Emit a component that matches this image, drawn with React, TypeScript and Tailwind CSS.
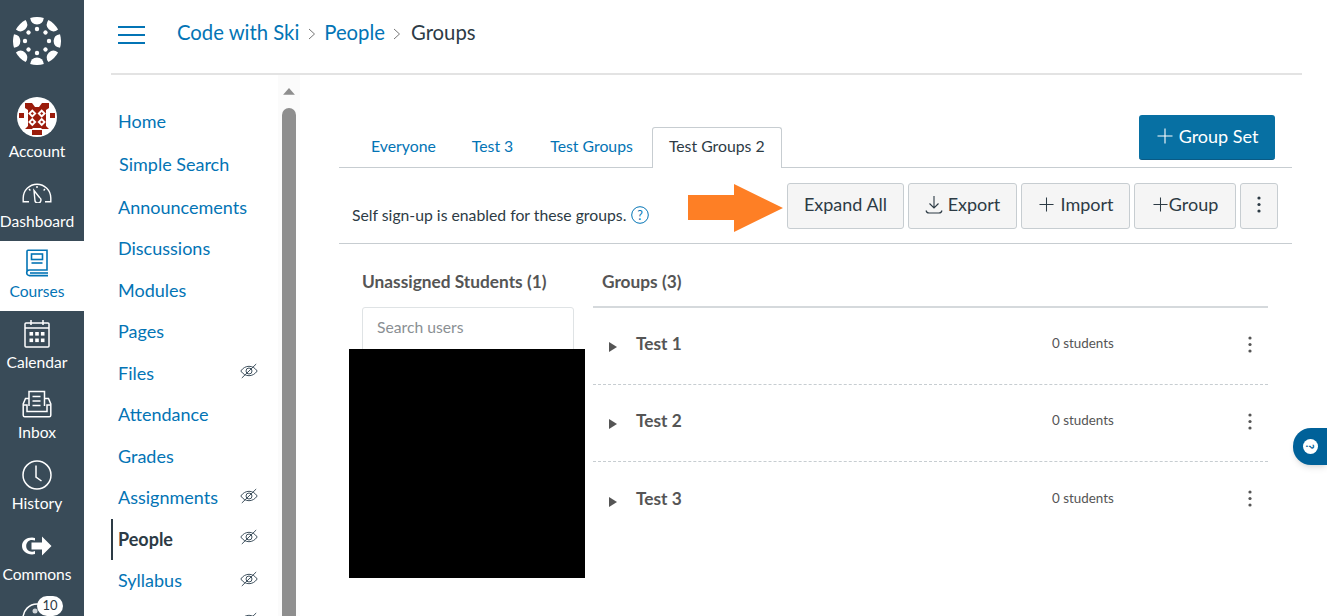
import React from "react";

const Logo = () => (
  <svg width="48" height="48" viewBox="0 0 48 48" fill="#fff">
    {[0, 45, 90, 135, 180, 225, 270, 315].map((a) => (
      <g key={a} transform={`rotate(${a} 24 24)`}>
        <path d="M17.200 1 A24 24 0 0 1 30.800 1 Q30 7.200 24 7.400 Q18 7.200 17.200 1Z" />
        <circle cx="24" cy="12" r="2.200" />
      </g>
    ))}
  </svg>
);

const Avatar = () => (
  <svg width="40" height="40" viewBox="0 0 40 40">
    <circle cx="20" cy="20" r="20" fill="#fff" />
    <path d="M8 6h7l3 4h4l3-4h7v5l-3 2v16l3 3H25l-1-1H16l-1 1H8l3-3V13l-3-2z" fill="#9b1c0c" />
    {[[15.300, 16.500], [24.700, 16.500], [15.300, 25], [24.700, 25]].map(([x, y]) => (
      <g key={`${x}-${y}`}>
        <path d={`M${x} ${y - 4.200}l4.200 4.200-4.200 4.200-4.200-4.200z`} fill="#fff" />
        <path d={`M${x} ${y - 1.600}l1.600 1.600-1.600 1.600-1.600-1.600z`} fill="#9b1c0c" />
      </g>
    ))}
    <rect x="2" y="16" width="5" height="5" fill="#9b1c0c" />
    <rect x="33" y="16" width="5" height="5" fill="#9b1c0c" />
    <rect x="15" y="33" width="10" height="5" fill="#9b1c0c" />
  </svg>
);

const Dashboard = () => (
  <svg width="30" height="21" viewBox="0 0 30 21" fill="none" stroke="#fff" strokeWidth="1.400">
    <path d="M7 19.800H1.200V16A13.800 13.800 0 0 1 28.800 16v3.800H23" />
    <path d="M12 8.500l5.500 7a3 3 0 1 1-4.600 2.400z" />
    <path d="M15 4v2M7 7l1.400 1.400M23 7l-1.400 1.400" />
  </svg>
);

const Book = () => (
  <svg width="26" height="28" viewBox="0 0 26 28" fill="none" stroke="#0374b5" strokeWidth="1.600">
    <path d="M3 22V2.200a1 1 0 0 1 1-1h19V21H5.500a2.800 2.800 0 0 0 0 5.600H24" />
    <path d="M6 24h18" />
    <rect x="7.500" y="5" width="11" height="5.500" />
    <path d="M7.500 14h11" />
  </svg>
);

const Calendar = () => (
  <svg width="26" height="29" viewBox="0 0 26 29" fill="none" stroke="#fff" strokeWidth="1.500">
    <rect x="1" y="4" width="24" height="24" rx="1" />
    <path d="M1 9h24M7 1v5M19 1v5" />
    {[[5.500, 13], [11.200, 13], [16.900, 13], [5.500, 19.500], [11.200, 19.500], [16.900, 19.500]].map(([x, y]) => (
      <rect key={`${x}-${y}`} x={x} y={y} width="3.600" height="3.600" fill="#fff" stroke="none" />
    ))}
  </svg>
);

const Inbox = () => (
  <svg width="30" height="28" viewBox="0 0 30 28" fill="none" stroke="#fff" strokeWidth="1.500">
    <path d="M7 16V1.500h15.500V16" />
    <path d="M10.500 6.500h8M10.500 11h8M10.500 15.500h8" />
    <path d="M7 8.500H3.500L1.200 14v11.200a1.500 1.500 0 0 0 1.500 1.500h24.600a1.500 1.500 0 0 0 1.500-1.500V14l-2.300-5.500H22.500" />
    <path d="M1.500 15h3.500v6.500h20V15h3.500" />
  </svg>
);

const Clock = () => (
  <svg width="30" height="30" viewBox="0 0 30 30" fill="none" stroke="#fff" strokeWidth="1.500">
    <circle cx="15" cy="15" r="14" />
    <path d="M14 5.500v11.500l5.500 4" />
  </svg>
);

const Commons = () => (
  <svg width="30" height="22" viewBox="0 0 30 22" fill="#fff">
    <path d="M13 5.600V3a11 11 0 0 0-3-.4C4.500 2.600 0 6 0 11s4.500 8.400 10 8.400c1.100 0 2.200-.1 3-.4v-3a6 6 0 0 1-3 .7c-3.500 0-5.800-2.400-5.800-5.700S6.500 5 10 5c1.100 0 2.100.2 3 .6z" />
    <path d="M20 1.500 29.500 11 20 20.500v-6H9.500v-7H20z" />
  </svg>
);

const EyeOff = () => (
  <svg width="18" height="16" viewBox="0 0 18 16" fill="none" stroke="#3f515e" strokeWidth="1" className="mt-[-4px]">
    <path d="M.8 8C3 4.800 6 3.300 9 3.300S15 4.800 17.200 8C15 11.200 12 12.700 9 12.700S3 11.200.8 8z" />
    <circle cx="9" cy="8" r="3" />
    <path d="M1.800 15 16.200 1" />
  </svg>
);

const Plus = ({ size = 15, color = "#2d3b45" }: { size?: number; color?: string }) => (
  <svg width={size} height={size} viewBox="0 0 16 16" stroke={color} strokeWidth="1.100" fill="none">
    <path d="M8 .5v15M.5 8h15" />
  </svg>
);

const Kebab = ({ color = "#2d3b45" }: { color?: string }) => (
  <svg width="4" height="17" viewBox="0 0 4 17" fill={color}>
    <circle cx="2" cy="2" r="1.600" />
    <circle cx="2" cy="8.500" r="1.600" />
    <circle cx="2" cy="15" r="1.600" />
  </svg>
);

const sideItems = [
  { label: "Dashboard", icon: <Dashboard /> },
  { label: "Courses", icon: <Book />, active: true },
  { label: "Calendar", icon: <Calendar /> },
  { label: "Inbox", icon: <Inbox /> },
  { label: "History", icon: <Clock /> },
  { label: "Commons", icon: <Commons /> },
];

const navItems: { label: string; eye?: boolean; active?: boolean; ml?: boolean; h?: string }[] = [
  { label: "Home", h: "h-[43px]" },
  { label: "Simple Search", ml: true, h: "h-[44px]" },
  { label: "Announcements" },
  { label: "Discussions" },
  { label: "Modules" },
  { label: "Pages" },
  { label: "Files", eye: true },
  { label: "Attendance" },
  { label: "Grades" },
  { label: "Assignments", eye: true },
  { label: "People", eye: true, active: true },
  { label: "Syllabus", eye: true },
  { label: "Outcomes", eye: true },
];

const Btn = ({ w, children }: { w: string; children: React.ReactNode }) => (
  <button className={`flex h-[46px] items-center justify-center rounded-[3px] border border-[#c7cdd1] bg-[#f5f5f5] pb-[4px] text-[18px] text-[#2d3b45] ${w}`}>
    {children}
  </button>
);

const Row = ({ name }: { name: string }) => (
  <div className="flex h-[77px] items-center border-b border-dashed border-[#c7cdd1] last:border-b-0">
    <svg width="8" height="10" viewBox="0 0 8 10" className="ml-[16px] mt-[2px]" fill="#555">
      <path d="M0 0l8 5-8 5z" />
    </svg>
    <span className="ml-[19px] mt-[-4px] w-[416px] text-[17.300px] font-bold text-[#555]">{name}</span>
    <span className="mt-[-5px] w-[196px] text-[13.400px] text-[#555]">0 students</span>
    <span className="mt-[-4px]"><Kebab color="#555" /></span>
  </div>
);

const Chevron = () => (
  <svg width="8" height="12" viewBox="0 0 8 12" fill="none" stroke="#777" className="mx-[8.500px] mt-[2px]">
    <path d="M1 1l5.500 5-5.500 5" />
  </svg>
);

export default function App() {
  return (
    <div className="relative flex h-[616px] w-[1327px] overflow-hidden bg-white font-['Lato','sans-serif']">
      <aside className="flex h-full w-[84px] shrink-0 flex-col bg-[#394b58] text-white">
        <div className="flex h-[82px] w-[74px] shrink-0 items-center justify-center"><Logo /></div>
        <div className="flex h-[88px] w-[74px] shrink-0 flex-col items-center pt-[15px]">
          <Avatar />
          <span className="mt-[4px] whitespace-nowrap text-[15.600px] leading-[20px]">Account</span>
        </div>
        {sideItems.map((s) => (
          <div
            key={s.label}
            className={`flex h-[70.600px] w-full shrink-0 flex-col items-center justify-end pb-[10px] pr-[10px] ${s.active ? "bg-white text-[#0374b5]" : ""}`}
          >
            <div className="flex h-[30px] items-center justify-center">{s.icon}</div>
            <span className="mt-[3px] whitespace-nowrap text-[15.600px] leading-[20px]">{s.label}</span>
          </div>
        ))}
        <div className="relative h-[30px] w-full shrink-0">
          <svg width="30" height="30" viewBox="0 0 30 30" className="absolute left-[22px] top-[9px]" fill="none" stroke="#fff" strokeWidth="1.500">
            <circle cx="15" cy="15" r="14" />
            <circle cx="13" cy="8" r="2.500" fill="#cfd4d8" stroke="none" />
          </svg>
          <span className="absolute left-[37px] top-[2px] flex h-[20px] w-[26px] items-center justify-center rounded-full bg-white text-[13px] text-[#2d3b45]">10</span>
        </div>
      </aside>

      <div className="flex min-w-0 flex-1 flex-col pl-[27px] pr-[25px]">
        <header className="flex h-[75px] shrink-0 items-center border-b-2 border-[#e3e3e3] pb-[8px]">
          <svg width="27" height="18" viewBox="0 0 27 18" stroke="#0374b5" strokeWidth="2" className="ml-[7px] mt-[4px]">
            <path d="M0 1h27M0 9h27M0 17h27" />
          </svg>
          <nav className="ml-[32px] flex items-center text-[20.300px] text-[#0374b5]">
            <span>Code with Ski</span>
            <Chevron />
            <span>People</span>
            <Chevron />
            <span className="ml-[1px] text-[#2d3b45]">Groups</span>
          </nav>
        </header>

        <div className="flex min-h-0 flex-1">
          <div className="relative flex w-[189px] shrink-0 overflow-hidden">
            <ul className="w-[167px] pt-[24.500px]">
              {navItems.map((n) => (
                <li
                  key={n.label}
                  className={`flex items-center justify-between pr-[20px] text-[18px] ${n.h ?? "h-[41.500px]"} ${n.active ? "border-l-2 border-[#2d3b45] pl-[5px] font-bold text-[#2d3b45]" : "pl-[7px] text-[#0374b5]"}`}
                >
                  <span className={n.ml ? "ml-[1px]" : ""}>{n.label}</span>
                  {n.eye && <EyeOff />}
                </li>
              ))}
            </ul>
            <div className="flex w-[22px] shrink-0 flex-col items-center bg-[#fbfbfb] pt-[13px]">
              <svg width="14" height="8" viewBox="0 0 14 8" fill="#8e8e8e"><path d="M7 0l7 8H0z" /></svg>
              <div className="mt-[13px] h-[600px] w-[14px] rounded-t-[7px] bg-[#8e8e8e]" />
            </div>
          </div>

          <main className="min-w-0 flex-1 pl-[39px] pr-[10px]">
            <div className="flex h-[93px] items-end justify-between border-b border-[#c7cdd1]">
              <div className="flex items-end text-[15.800px] text-[#0374b5]">
                <span className="flex h-[39px] items-center pb-[4px] pl-[32px] pr-[18px]">Everyone</span>
                <span className="flex h-[39px] items-center pb-[4px] pl-[18px] pr-[19px]">Test 3</span>
                <span className="flex h-[39px] items-center pb-[4px] pl-[18px] pr-[19px]">Test Groups</span>
                <span className="mb-[-1px] flex h-[41px] items-center rounded-t-[3px] border border-b-0 border-[#c7cdd1] bg-white px-[16px] pb-[4px] text-[#2d3b45]">Test Groups 2</span>
              </div>
              <button className="mb-[7px] mr-[17px] flex h-[45px] w-[136px] items-center justify-center gap-[6px] rounded-[3px] border-b border-[#0a5a85] bg-[#0770a3] pb-[2px] pl-[1px] text-[18px] text-white">
                <Plus size={16} color="#fff" />
                Group Set
              </button>
            </div>

            <div className="flex h-[76px] items-center justify-between border-b border-[#c7cdd1] pb-[1px] pl-[13px] pr-[14px]">
              <div className="mt-[20px] flex items-center whitespace-nowrap text-[15.750px] text-[#2d3b45]">
                Self sign-up is enabled for these groups.
                <svg width="18" height="18" viewBox="0 0 18 18" fill="none" className="ml-[5px]" stroke="#0374b5">
                  <circle cx="9" cy="9" r="8.300" />
                  <text x="9" y="13.500" fontSize="12.500" textAnchor="middle" fill="#0374b5" stroke="none">?</text>
                </svg>
              </div>
              <div className="mt-[2px] flex gap-[4px]">
                <Btn w="w-[117px]">Expand All</Btn>
                <Btn w="w-[109px] gap-[5px]">
                  <svg width="18" height="19" viewBox="0 0 18 19" fill="none" stroke="#2d3b45" strokeWidth="1.100">
                    <path d="M9 1v12M4.500 8.500 9 13l4.500-4.500M1 15.500c.5 2 1.500 2.500 3 2.500h10c1.500 0 2.500-.5 3-2.500" />
                  </svg>
                  Export
                </Btn>
                <Btn w="w-[109px] gap-[6px] pl-[2px]"><Plus />Import</Btn>
                <Btn w="w-[102px] gap-[1px] pl-[1px]"><Plus />Group</Btn>
                <Btn w="w-[38px]"><Kebab /></Btn>
              </div>
            </div>

            <div className="flex">
              <section className="w-[254px] pl-[23px]">
                <h2 className="flex h-[63px] items-center pt-[13px] text-[17.300px] font-bold text-[#555]">Unassigned Students (1)</h2>
                <div className="flex h-[46px] w-[212px] items-center rounded-t-[3px] border border-[#dfe3e5] bg-white pb-[5px] pl-[14px] text-[15.700px] text-[#8a8f93]">Search users</div>
              </section>
              <section className="w-[675px]">
                <h2 className="flex h-[64px] items-center border-b-2 border-[#d5d9dc] pl-[9px] pt-[14px] text-[17.300px] font-bold text-[#555]">Groups (3)</h2>
                <Row name="Test 1" />
                <Row name="Test 2" />
                <Row name="Test 3" />
              </section>
            </div>
          </main>
        </div>
      </div>

      {/* redaction block painted over the screenshot */}
      <div className="absolute left-[349px] top-[349px] h-[229px] w-[236px] bg-black" />
      {/* annotation arrow */}
      <svg width="96" height="48" viewBox="0 0 96 48" className="absolute left-[688px] top-[184px]">
        <path d="M0 11h46V0l49 24-49 24V36H0z" fill="#fe7f25" />
      </svg>
      {/* help tab */}
      <div className="absolute left-[1293px] top-[428px] flex h-[37px] w-[34px] items-center rounded-l-[18px] bg-[#006199] pl-[10px] shadow-md">
        <span className="flex h-[15px] w-[15px] rotate-90 items-center justify-center rounded-full bg-white text-[11px] font-bold leading-none text-[#006199]">?</span>
      </div>
    </div>
  );
}
